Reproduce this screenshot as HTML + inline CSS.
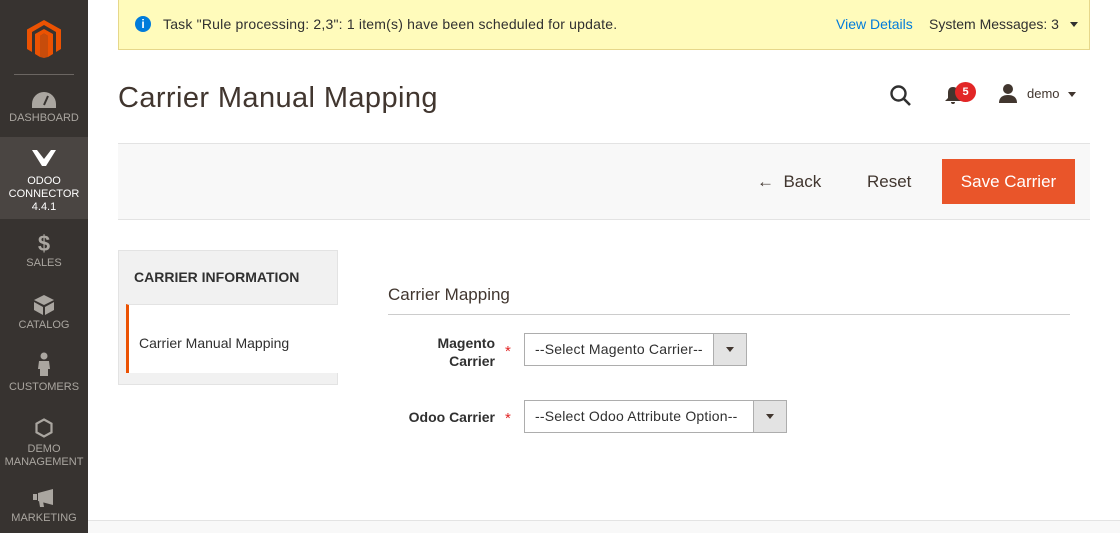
<!DOCTYPE html>
<html><head><meta charset="utf-8"><style>
*{margin:0;padding:0;box-sizing:border-box}
body{width:1120px;height:533px;overflow:hidden;background:#fff;font-family:"Liberation Sans","DejaVu Sans",sans-serif;color:#303030;position:relative}
.sb{position:absolute;left:0;top:0;width:88px;height:533px;background:#373330}
.it{position:absolute;left:0;width:88px;text-align:center;color:#aaa6a0;font-size:11px;line-height:13px}
.abs{position:absolute}
.notice{position:absolute;left:118px;top:0;width:972px;height:50px;background:#fffbbb;border:1px solid #e6d78a;border-top:none;font-size:14px}
.bar{position:absolute;left:118px;top:143px;width:972px;height:77px;background:#f8f8f8;border-top:1px solid #e3e3e3;border-bottom:1px solid #e3e3e3}
.sel{position:absolute;height:33px;border:1px solid #adadad;font-size:14px;color:#303030;padding:7px 10px;background:#fff;letter-spacing:.2px}
.sel .ar{position:absolute;right:0;top:0;width:33px;height:31px;background:#e3e3e3;border-left:1px solid #adadad}
.sel .ar:after{content:"";position:absolute;left:12px;top:13px;border:4px solid transparent;border-top:5px solid #41362f}
</style></head><body>
<div class="sb">
 <svg class="abs" style="left:27px;top:20px" width="34" height="38" viewBox="0 0 34 38"><path d="M17 0L34 9.5V29L29 32V12L17 5 5 12V32L0 29V9.5Z M8 14L17 9 26 14V34L21 37V16L17 13.5 13 16V37L8 34Z" fill="#eb5202"/><path d="M17 13.5L21 16V37L17 38 13 37V16Z" fill="#eb5202" opacity=".8"/></svg>
 <div class="abs" style="left:14px;top:74px;width:60px;height:1px;background:#6b6662"></div>
 <svg class="abs" style="left:32px;top:92px" width="24" height="16" viewBox="0 0 24 16"><path d="M12 0A12 12 0 0 0 0 12v4h24v-4A12 12 0 0 0 12 0z" fill="#aaa6a0"/><path d="M12 13l4-9" stroke="#373330" stroke-width="2"/></svg>
 <div class="it" style="top:112px">DASHBOARD</div>
 <div class="abs" style="left:0;top:137px;width:88px;height:82px;background:#4a4542"></div>
 <svg class="abs" style="left:32px;top:150px" width="24" height="16" viewBox="0 0 24 16"><path d="M0 0h5l7 9 7-9h5L14 16h-4z" fill="#fff"/></svg>
 <div class="it" style="top:175px;color:#fff">ODOO<br>CONNECTOR<br>4.4.1</div>
 <div class="it" style="top:233px;font-size:22px;line-height:22px;font-weight:bold">$</div>
 <div class="it" style="top:257px">SALES</div>
 <svg class="abs" style="left:34px;top:295px" width="20" height="20" viewBox="0 0 20 20"><path d="M10 0L20 5 10 10 0 5z M0 7l9 5v8L0 15z M20 7l-9 5v8l9-5z" fill="#aaa6a0"/></svg>
 <div class="it" style="top:319px">CATALOG</div>
 <svg class="abs" style="left:37px;top:352px" width="14" height="24" viewBox="0 0 14 24"><circle cx="7" cy="4" r="3.5" fill="#aaa6a0"/><path d="M2 9h10l1 8-2 0v7H3v-7H1z" fill="#aaa6a0"/></svg>
 <div class="it" style="top:381px">CUSTOMERS</div>
 <svg class="abs" style="left:35px;top:418px" width="18" height="20" viewBox="0 0 18 20"><path d="M9 1.5L16.5 5.7v8.6L9 18.5 1.5 14.3V5.7z" fill="none" stroke="#aaa6a0" stroke-width="2.2"/></svg>
 <div class="it" style="top:443px">DEMO<br>MANAGEMENT</div>
 <svg class="abs" style="left:33px;top:489px" width="22" height="18" viewBox="0 0 22 18"><path d="M0 5h4v6H0z M5 4l15-4v16L5 12z M6 12h4l1 6H7z" fill="#aaa6a0"/></svg>
 <div class="it" style="top:512px">MARKETING</div>
</div>
<div class="notice">
 <div class="abs" style="left:16px;top:16px;width:16px;height:16px;border-radius:50%;background:#007bdb;color:#fff;font-size:12px;font-weight:bold;text-align:center;line-height:16px">i</div>
 <div class="abs" style="left:44px;top:16px;letter-spacing:.2px">Task "Rule processing: 2,3": 1 item(s) have been scheduled for update.</div>
 <div class="abs" style="left:717px;top:16px;color:#007bdb">View Details</div>
 <div class="abs" style="left:810px;top:16px">System Messages: 3</div>
 <div class="abs" style="left:951px;top:22px;border:4px solid transparent;border-top:5px solid #303030"></div>
</div>
<div class="abs" style="left:118px;top:82px;font-size:29px;color:#41362f;letter-spacing:.4px">Carrier Manual Mapping</div>
<svg class="abs" style="left:889px;top:84px" width="24" height="24" viewBox="0 0 24 24"><circle cx="9.5" cy="9.5" r="7" fill="none" stroke="#303030" stroke-width="2.4"/><path d="M14.5 14.5L21 21" stroke="#303030" stroke-width="2.6"/></svg>
<svg class="abs" style="left:944px;top:86px" width="18" height="20" viewBox="0 0 18 20"><path d="M9 1C5 1 4 4 4 7v5L1 15h16l-3-3V7c0-3-1-6-5-6z M7 16h4a2 2 0 0 1-4 0z" fill="#41362f"/></svg>
<div class="abs" style="left:955px;top:82px;width:21px;height:20px;border-radius:50%;background:#e22626;color:#fff;font-size:11px;font-weight:bold;text-align:center;line-height:20px">5</div>
<svg class="abs" style="left:998px;top:83px" width="20" height="20" viewBox="0 0 20 20"><circle cx="10" cy="6" r="5" fill="#41362f"/><path d="M1 20c0-6 4-8 9-8s9 2 9 8z" fill="#41362f"/></svg>
<div class="abs" style="left:1027px;top:86px;font-size:13px;color:#41362f">demo</div>
<div class="abs" style="left:1068px;top:92px;border:4px solid transparent;border-top:5px solid #41362f"></div>
<div class="bar">
 <div class="abs" style="left:639px;top:28px;font-size:17px;color:#41362f">&#8592;&nbsp; Back</div>
 <div class="abs" style="left:749px;top:28px;font-size:17px;color:#41362f">Reset</div>
 <div class="abs" style="left:824px;top:15px;width:133px;height:45px;background:#e9552a;color:#fff;font-size:17px;text-align:center;line-height:45px">Save Carrier</div>
</div>
<div class="abs" style="left:118px;top:250px;width:220px;height:135px;background:#f1f1f1;border:1px solid #e3e3e3"></div>
<div class="abs" style="left:134px;top:269px;font-size:14px;font-weight:bold;color:#303030">CARRIER INFORMATION</div>
<div class="abs" style="left:126px;top:304px;width:212px;height:69px;background:#fff;border-left:3px solid #eb5202;border-top:1px solid #e3e3e3"></div>
<div class="abs" style="left:139px;top:335px;font-size:14px;color:#303030">Carrier Manual Mapping</div>
<div class="abs" style="left:388px;top:285px;font-size:17px;color:#41362f">Carrier Mapping</div>
<div class="abs" style="left:388px;top:314px;width:682px;height:1px;background:#ccc"></div>
<div class="abs" style="left:420px;top:334px;width:75px;text-align:right;font-size:14px;font-weight:bold;line-height:18px;color:#303030">Magento Carrier</div>
<div class="abs" style="left:505px;top:343px;color:#e22626;font-size:15px">*</div>
<div class="sel" style="left:524px;top:333px;width:223px">--Select Magento Carrier--<div class="ar"></div></div>
<div class="abs" style="left:380px;top:409px;width:115px;text-align:right;font-size:14px;font-weight:bold;color:#303030">Odoo Carrier</div>
<div class="abs" style="left:505px;top:410px;color:#e22626;font-size:15px">*</div>
<div class="sel" style="left:524px;top:400px;width:263px">--Select Odoo Attribute Option--<div class="ar"></div></div>
<div class="abs" style="left:88px;top:520px;width:1032px;height:13px;background:#f8f8f8;border-top:1px solid #e3e3e3"></div>
</body></html>
